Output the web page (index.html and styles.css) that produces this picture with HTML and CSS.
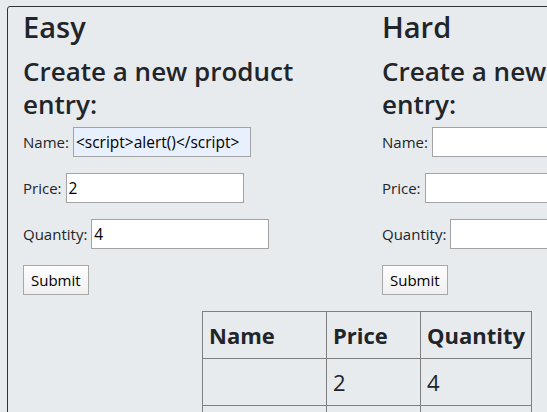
FILE: index.html
```html
<!DOCTYPE html>
<html>
<head>
<meta charset="utf-8">
<link rel="stylesheet" href="styles.css">
</head>
<body>
<div class="page">
  <div class="columns">
    <section class="col">
      <h1 class="title">Easy</h1>
      <h2 class="subtitle">Create a new product entry:</h2>
      <form class="form">
        <p class="row"><label class="label">Name: </label><input class="field field-filled" type="text" value="&lt;script&gt;alert()&lt;/script&gt;"></p>
        <p class="row"><label class="label">Price: </label><input class="field" type="text" value="2"></p>
        <p class="row"><label class="label">Quantity: </label><input class="field" type="text" value="4"></p>
        <p class="row"><button class="btn" type="button">Submit</button></p>
      </form>
    </section>
    <section class="col">
      <h1 class="title">Hard</h1>
      <h2 class="subtitle">Create a new product entry:</h2>
      <form class="form">
        <p class="row"><label class="label">Name: </label><input class="field" type="text"></p>
        <p class="row"><label class="label">Price: </label><input class="field" type="text"></p>
        <p class="row"><label class="label">Quantity: </label><input class="field" type="text"></p>
        <p class="row"><button class="btn" type="button">Submit</button></p>
      </form>
    </section>
  </div>
  <table class="products">
    <thead>
      <tr><th class="c-name">Name</th><th class="c-price">Price</th><th class="c-qty">Quantity</th></tr>
    </thead>
    <tbody>
      <tr><td></td><td>2</td><td>4</td></tr>
      <tr><td>&nbsp;</td><td></td><td></td></tr>
    </tbody>
  </table>
</div>
</body>
</html>
```

FILE: styles.css
```css
html, body {
  margin: 0;
  padding: 0;
  background: #e8ebee;
}
body {
  font-family: "Open Sans", "Noto Sans", sans-serif;
  color: #212529;
  overflow: hidden;
}
.page {
  margin: 6px 0 0 7px;
  width: 800px;
  border: 1px solid #333;
  border-radius: 3px;
  padding: 0 15px 40px;
  min-height: 600px;
}
.columns {
  display: grid;
  grid-template-columns: 359px 359px;
}
.col {
  padding-right: 40px;
}
.title {
  font-size: 29px;
  font-weight: 600;
  line-height: 1.2;
  margin: 2px 0 0 0;
  padding-top: 1px;
}
.subtitle {
  font-size: 26px;
  font-weight: 600;
  line-height: 33px;
  margin: 10px 0 0;
}
.form {
  margin-top: 6px;
}
.row {
  margin: 0 0 16px;
  display: flex;
  align-items: center;
  font-size: 15px;
}
.label {
  margin-right: 4px;
}
.field {
  box-sizing: border-box;
  width: 178px;
  height: 30px;
  border: 1px solid #a3a3a3;
  background: #fff;
  font-family: inherit;
  font-size: 15.5px;
  padding: 0 2px;
  color: #000;
}
.field-filled {
  background: #e8f0fe;
}
.btn {
  box-sizing: border-box;
  height: 30px;
  padding: 0 7px;
  border: 1px solid #a8a8a8;
  background: linear-gradient(#fdfdfd, #f0f0f0);
  font-family: inherit;
  font-size: 15px;
  color: #000;
}
.products {
  border-collapse: collapse;
  margin-left: 179px;
  margin-top: 0;
  font-size: 22px;
}
.products th, .products td {
  border: 1px solid #808080;
  height: 46px;
  padding: 0 6px;
  text-align: left;
}
.products th {
  font-weight: 700;
}
.products td {
  font-weight: 400;
}
.c-name { width: 111px; }
.c-price { width: 81px; }
.c-qty { width: 97px; }
```
